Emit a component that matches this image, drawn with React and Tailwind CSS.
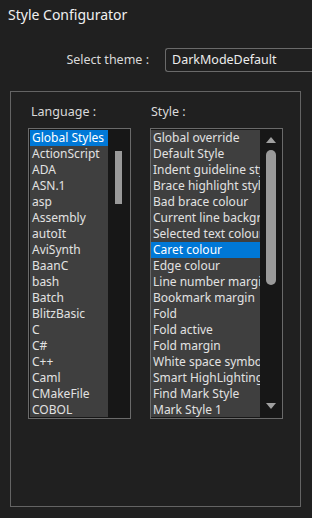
const languages = [
  "Global Styles", "ActionScript", "ADA", "ASN.1", "asp", "Assembly", "autoIt", "AviSynth",
  "BaanC", "bash", "Batch", "BlitzBasic", "C", "C#", "C++", "Caml", "CMakeFile", "COBOL",
];

const styles = [
  "Global override", "Default Style", "Indent guideline style", "Brace highlight style",
  "Bad brace colour", "Current line background colour", "Selected text colour", "Caret colour",
  "Edge colour", "Line number margin", "Bookmark margin", "Fold", "Fold active", "Fold margin",
  "White space symbol", "Smart HighLighting", "Find Mark Style", "Mark Style 1",
];

const font = { fontFamily: '"Noto Sans", "Open Sans", sans-serif' };

const ListItem = ({ text, selected }) => (
  <div
    className={`h-4 leading-4 pl-[2px] whitespace-nowrap overflow-hidden text-[12px] ${
      selected ? "bg-[#0078d7] text-white" : "text-[#e2e2e2]"
    }`}
  >
    {text}
  </div>
);

const App = () => {
  return (
    <div className="w-[312px] h-[518px] bg-[#202020] overflow-hidden flex flex-col" style={font}>
      <div className="pl-2 pt-[5px] h-[48px] text-[14px] leading-5 text-[#f0f0f0]">Style Configurator</div>

      <div className="flex items-center h-[24px]">
        <div className="w-[149px] text-right text-[12.5px] text-[#dadada]">Select theme :</div>
        <div className="ml-[16px] flex-1 h-[24px] border border-r-0 border-[#6a6a6a] rounded-tl-[3px] rounded-bl-[3px] pl-[6px] flex items-center text-[12.5px] text-[#ececec]">
          DarkModeDefault
        </div>
      </div>

      <div className="ml-[10px] mt-[19px] w-[291px] h-[416px] border border-[#646464]">
        <div className="flex pt-[11px]">
          <div className="ml-[17px] w-[103px]">
            <div className="pl-[3px] h-[25px] text-[12.5px] text-[#dadada]">Language :</div>
            <div className="h-[291px] border border-[#6a6a6a] bg-[#171717] p-[1px] flex">
              <div className="w-[78px] bg-[#3f3f3f]">
                {languages.map((l, i) => (
                  <ListItem key={l} text={l} selected={i === 0} />
                ))}
              </div>
              <div className="flex-1 relative">
                <div className="absolute left-[7px] top-[21px] w-[7px] h-[53px] bg-[#9a9a9a]" />
              </div>
            </div>
          </div>

          <div className="ml-[19px] w-[133px]">
            <div className="pl-[1px] h-[25px] text-[12.5px] text-[#dadada]">Style :</div>
            <div className="h-[291px] border border-[#6a6a6a] bg-[#171717] p-[1px] pl-0 flex">
              <div className="w-[109px] bg-[#3f3f3f]">
                {styles.map((s, i) => (
                  <ListItem key={s} text={s} selected={i === 7} />
                ))}
              </div>
              <div className="flex-1 flex flex-col items-center pt-[7px] pb-[7px]">
                <svg width="10" height="7" viewBox="0 0 10 7" className="ml-[1px]">
                  <path d="M5 0 L10 6 L0 6 Z" fill="#a0a0a0" />
                </svg>
                <div className="mt-[6px] ml-[1px] w-[10px] h-[135px] rounded-t-[5px] rounded-b-[5px] bg-[#9a9a9a]" />
                <div className="flex-1" />
                <svg width="10" height="7" viewBox="0 0 10 7" className="ml-[1px]">
                  <path d="M0 0 L10 0 L5 6 Z" fill="#a0a0a0" />
                </svg>
              </div>
            </div>
          </div>
        </div>
      </div>
    </div>
  );
};

export default App;
